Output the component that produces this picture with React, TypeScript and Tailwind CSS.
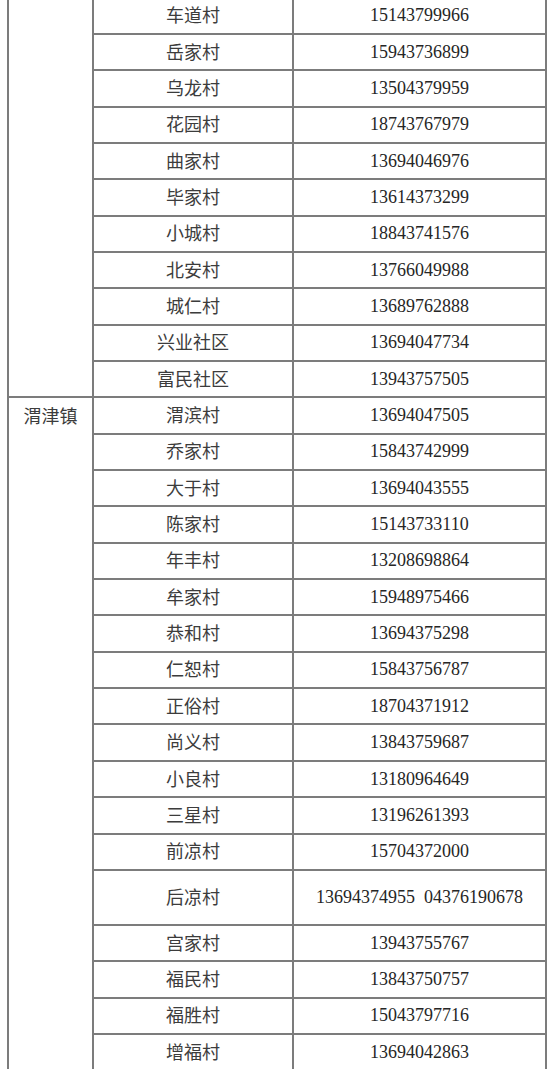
const upperRows: [string, string][] = [
  ["车道村", "15143799966"],
  ["岳家村", "15943736899"],
  ["乌龙村", "13504379959"],
  ["花园村", "18743767979"],
  ["曲家村", "13694046976"],
  ["毕家村", "13614373299"],
  ["小城村", "18843741576"],
  ["北安村", "13766049988"],
  ["城仁村", "13689762888"],
  ["兴业社区", "13694047734"],
  ["富民社区", "13943757505"],
];

const weijinRows: [string, string][] = [
  ["渭滨村", "13694047505"],
  ["乔家村", "15843742999"],
  ["大于村", "13694043555"],
  ["陈家村", "15143733110"],
  ["年丰村", "13208698864"],
  ["牟家村", "15948975466"],
  ["恭和村", "13694375298"],
  ["仁恕村", "15843756787"],
  ["正俗村", "18704371912"],
  ["尚义村", "13843759687"],
  ["小良村", "13180964649"],
  ["三星村", "13196261393"],
  ["前凉村", "15704372000"],
  ["后凉村", "13694374955\u00a0\u00a004376190678"],
  ["宫家村", "13943755767"],
  ["福民村", "13843750757"],
  ["福胜村", "15043797716"],
  ["增福村", "13694042863"],
];

const cell = "border-2 border-[#7c7c7c] text-center align-middle p-0";
const cjk = "font-['Noto_Sans_CJK_SC',sans-serif] text-[18px] leading-none text-[#3c3c3c] pb-[3px]";
const num = "font-['Liberation_Serif',serif] text-[18px] text-[#262626]";

function Row({ name, phone, first }: { name: string; phone: string; first?: React.ReactNode }) {
  const tall = name === "后凉村";
  return (
    <tr className={tall ? "h-[55px]" : "h-[36.35px]"}>
      {first}
      <td className={`${cell} ${cjk}`}>{name}</td>
      <td className={`${cell} ${num}`}>{phone}</td>
    </tr>
  );
}

export default function App() {
  return (
    <div className="h-[1069px] overflow-hidden bg-white">
      <table className="-mt-[3.4px] ml-[7px] w-[538px] table-fixed border-collapse">
        <colgroup>
          <col className="w-[85px]" />
          <col className="w-[200px]" />
          <col className="w-[253px]" />
        </colgroup>
        <tbody>
          {upperRows.map(([name, phone], i) => (
            <Row
              key={name}
              name={name}
              phone={phone}
              first={i === 0 ? <td rowSpan={upperRows.length} className={cell} /> : undefined}
            />
          ))}
          {weijinRows.map(([name, phone], i) => (
            <Row
              key={name}
              name={name}
              phone={phone}
              first={
                i === 0 ? (
                  <td rowSpan={weijinRows.length} className={`${cell} ${cjk} !align-top !pb-0`}>
                    <div className="flex h-[33px] items-center justify-center">渭津镇</div>
                  </td>
                ) : undefined
              }
            />
          ))}
        </tbody>
      </table>
    </div>
  );
}
